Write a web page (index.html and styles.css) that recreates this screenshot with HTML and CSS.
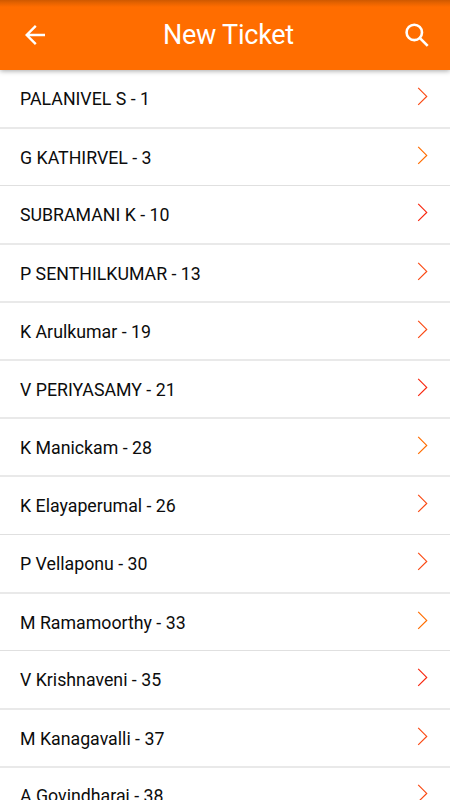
FILE: index.html
```html
<!DOCTYPE html>
<html lang="en">
<head>
<meta charset="utf-8">
<title>New Ticket</title>
<link rel="stylesheet" href="styles.css">
</head>
<body>
<svg class="defs" width="0" height="0" aria-hidden="true">
  <symbol id="chevron" viewBox="0 0 12 20"><path d="M1.2 .9 9.7 9.4 1.2 17.9"/></symbol>
</svg>
<header class="bar">
  <svg class="back" viewBox="0 0 22 22"><path d="M21 11H3M11.8 1.9 2.7 11l9.1 9.1"/></svg>
  <h1 class="title">New Ticket</h1>
  <svg class="search" viewBox="0 0 26 26"><circle cx="10.3" cy="10.4" r="7.7"/><path d="m15.7 15.8 8 8"/></svg>
</header>
<ul class="list">
  <li class="row tall"><span>PALANIVEL S - 1</span><svg class="chevron"><use href="#chevron"/></svg></li>
  <li class="row short"><span>G KATHIRVEL - 3</span><svg class="chevron amber"><use href="#chevron"/></svg></li>
  <li class="row tall"><span>SUBRAMANI K - 10</span><svg class="chevron red"><use href="#chevron"/></svg></li>
  <li class="row"><span>P SENTHILKUMAR - 13</span><svg class="chevron"><use href="#chevron"/></svg></li>
  <li class="row"><span>K Arulkumar - 19</span><svg class="chevron"><use href="#chevron"/></svg></li>
  <li class="row"><span>V PERIYASAMY - 21</span><svg class="chevron red"><use href="#chevron"/></svg></li>
  <li class="row"><span>K Manickam - 28</span><svg class="chevron amber"><use href="#chevron"/></svg></li>
  <li class="row thin"><span>K Elayaperumal - 26</span><svg class="chevron"><use href="#chevron"/></svg></li>
  <li class="row tall"><span>P Vellaponu - 30</span><svg class="chevron"><use href="#chevron"/></svg></li>
  <li class="row short"><span>M Ramamoorthy - 33</span><svg class="chevron amber"><use href="#chevron"/></svg></li>
  <li class="row tall"><span>V Krishnaveni - 35</span><svg class="chevron red"><use href="#chevron"/></svg></li>
  <li class="row"><span>M Kanagavalli - 37</span><svg class="chevron"><use href="#chevron"/></svg></li>
  <li class="row"><span>A Govindharaj - 38</span><svg class="chevron"><use href="#chevron"/></svg></li>
</ul>
</body>
</html>
```

FILE: styles.css
```css
* {
  box-sizing: border-box;
}

body {
  margin: 0;
  height: 800px;
  overflow: hidden;
  display: flex;
  flex-direction: column;
  background: #fff;
  color: #0c0c0c;
  font-family: Roboto, sans-serif;
}

.defs {
  display: none;
}

.bar {
  position: relative;
  flex: none;
  display: flex;
  align-items: center;
  height: 70px;
  padding: 0 20px 0 24px;
  background: linear-gradient(#cf5900 0, #e66300 3px, #ff6d00 7px);
  box-shadow: 0 1px 5px rgba(0, 0, 0, 0.35);
  color: #fff;
}

.bar svg {
  flex: none;
  fill: none;
  stroke: #fff;
}

.back {
  width: 22px;
  height: 22px;
  stroke-width: 2.4;
}

.search {
  width: 26px;
  height: 26px;
  margin-bottom: 1px;
  stroke-width: 2.6;
}

.title {
  flex: 1;
  margin: 0;
  padding-left: 7px;
  text-align: center;
  font-size: 27px;
  font-weight: 400;
  letter-spacing: -0.25px;
  line-height: 32px;
}

.list {
  flex: none;
  margin: 0;
  padding: 0;
  list-style: none;
}

.row {
  display: flex;
  align-items: flex-start;
  justify-content: space-between;
  height: 58px;
  padding: 18px 21px 0 20px;
  border-bottom: 2px solid #e9e9e9;
  font-size: 17.75px;
  line-height: 22px;
}

.tall {
  height: 59px;
}

.short {
  height: 57px;
}

.short,
.thin {
  border-bottom: 1px solid #e0e0e0;
}

.row:last-child {
  padding-top: 17px;
}

.chevron {
  width: 12px;
  height: 20px;
  margin-top: -1px;
  fill: none;
  stroke: #fa4a14;
  stroke-width: 1.2;
}

.amber {
  stroke: #ff6d00;
}

.red {
  stroke: #f82810;
}
```
